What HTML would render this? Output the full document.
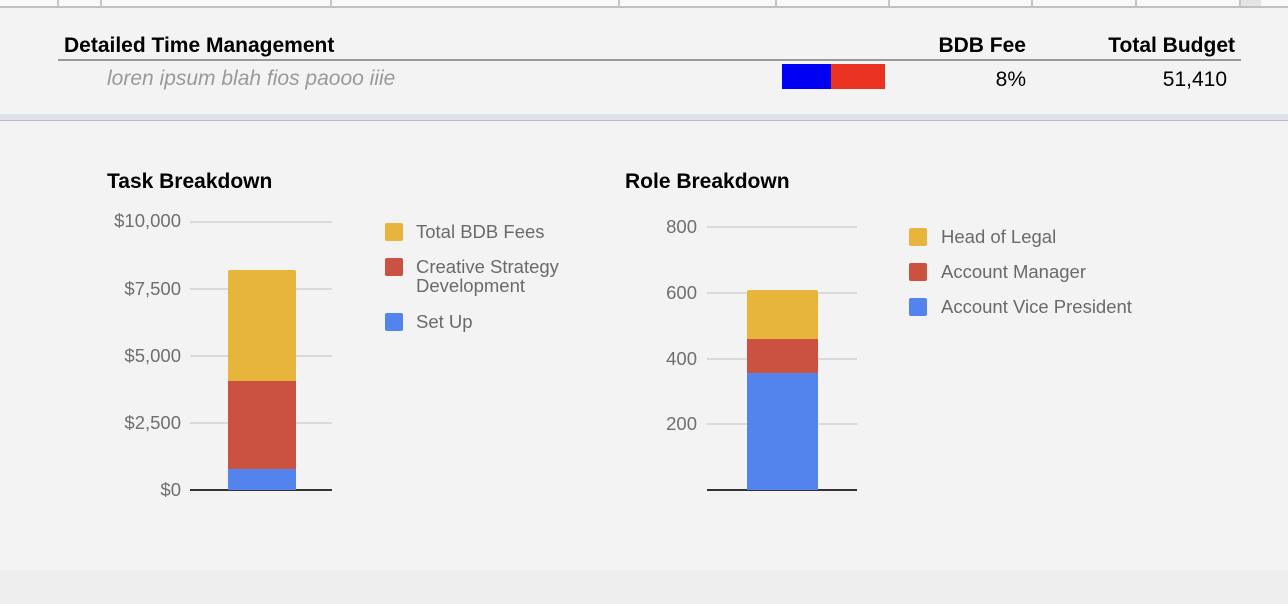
<!DOCTYPE html>
<html><head><meta charset="utf-8"><style>
*{margin:0;padding:0;box-sizing:border-box}
body{width:1288px;height:604px;background:#f3f3f3;position:relative;overflow:hidden;font-family:"Liberation Sans",Arial,sans-serif}
.a{position:absolute}
.vl{position:absolute;top:0;height:6px;width:2px;background:#c6c6c6}
.g{position:absolute;height:2px;background:#dadada}
.yl{position:absolute;font-size:18.5px;color:#6f6f6f;text-align:right;width:90px;line-height:20px}
.sq{position:absolute;width:18px;height:18px;border-radius:2px}
.lt{position:absolute;font-size:18.5px;color:#6a6a6a;line-height:19px}
</style></head><body>
<div class="a" style="left:0;top:0;width:1288px;height:6px;background:#f8f9fa"></div>
<div class="a" style="left:0;top:6px;width:1288px;height:2px;background:#c0c0c0"></div>
<div class="vl" style="left:57px"></div><div class="vl" style="left:100px"></div><div class="vl" style="left:330px"></div><div class="vl" style="left:618px"></div><div class="vl" style="left:775px"></div><div class="vl" style="left:888px"></div><div class="vl" style="left:1031px"></div><div class="vl" style="left:1135px"></div><div class="vl" style="left:1239px"></div>
<div class="a" style="left:1241px;top:0;width:20px;height:6px;background:#e4e4e4"></div>

<div class="a" style="left:64px;top:34px;font-size:21px;font-weight:bold;color:#000">Detailed Time Management</div>
<div class="a" style="left:880px;width:146px;text-align:right;top:34px;font-size:21px;font-weight:bold">BDB Fee</div>
<div class="a" style="left:1040px;width:195px;text-align:right;top:34px;font-size:21px;font-weight:bold">Total Budget</div>
<div class="a" style="left:58px;top:59px;width:1183px;height:2px;background:#999"></div>
<div class="a" style="left:107px;top:67px;font-size:21px;font-style:italic;color:#999">loren ipsum blah fios paooo iiie</div>
<div class="a" style="left:782px;top:64px;width:49px;height:25px;background:#0000f5"></div>
<div class="a" style="left:831px;top:64px;width:54px;height:25px;background:#ea3323"></div>
<div class="a" style="left:900px;width:126px;text-align:right;top:68px;font-size:21px">8%</div>
<div class="a" style="left:1050px;width:177px;text-align:right;top:68px;font-size:21px">51,410</div>
<div class="a" style="left:0;top:114px;width:1288px;height:6px;background:#dde1e8"></div>
<div class="a" style="left:0;top:120px;width:1288px;height:1px;background:#b8bcc4"></div>

<div class="a" style="left:107px;top:170px;font-size:21px;font-weight:bold">Task Breakdown</div>
<div class="g" style="left:190px;top:221px;width:142px"></div>
<div class="g" style="left:190px;top:288px;width:142px"></div>
<div class="g" style="left:190px;top:355px;width:142px"></div>
<div class="g" style="left:190px;top:422px;width:142px"></div>
<div class="a" style="left:190px;top:489px;width:142px;height:2px;background:#333"></div>
<div class="yl" style="left:91px;top:211px">$10,000</div>
<div class="yl" style="left:91px;top:279px">$7,500</div>
<div class="yl" style="left:91px;top:346px">$5,000</div>
<div class="yl" style="left:91px;top:413px">$2,500</div>
<div class="yl" style="left:91px;top:480px">$0</div>
<div class="a" style="left:228px;top:270px;width:68px;height:111px;background:#e8b53c;border-radius:2px 2px 0 0"></div>
<div class="a" style="left:228px;top:381px;width:68px;height:88px;background:#cb5140"></div>
<div class="a" style="left:228px;top:469px;width:68px;height:21px;background:#5383ec"></div>
<div class="sq" style="left:385px;top:223px;background:#e8b53c"></div>
<div class="sq" style="left:385px;top:258px;background:#cb5140"></div>
<div class="sq" style="left:385px;top:313px;background:#5383ec"></div>
<div class="lt" style="left:416px;top:222px">Total BDB Fees</div>
<div class="lt" style="left:416px;top:257px">Creative Strategy<br>Development</div>
<div class="lt" style="left:416px;top:312px">Set Up</div>

<div class="a" style="left:625px;top:170px;font-size:21px;font-weight:bold">Role Breakdown</div>
<div class="g" style="left:707px;top:226px;width:150px"></div>
<div class="g" style="left:707px;top:292px;width:150px"></div>
<div class="g" style="left:707px;top:358px;width:150px"></div>
<div class="g" style="left:707px;top:423px;width:150px"></div>
<div class="a" style="left:707px;top:489px;width:150px;height:2px;background:#333"></div>
<div class="yl" style="left:607px;top:217px">800</div>
<div class="yl" style="left:607px;top:283px">600</div>
<div class="yl" style="left:607px;top:349px">400</div>
<div class="yl" style="left:607px;top:414px">200</div>
<div class="a" style="left:747px;top:290px;width:71px;height:49px;background:#e8b53c;border-radius:2px 2px 0 0"></div>
<div class="a" style="left:747px;top:339px;width:71px;height:34px;background:#cb5140"></div>
<div class="a" style="left:747px;top:373px;width:71px;height:117px;background:#5383ec"></div>
<div class="sq" style="left:909px;top:228px;background:#e8b53c"></div>
<div class="sq" style="left:909px;top:263px;background:#cb5140"></div>
<div class="sq" style="left:909px;top:298px;background:#5383ec"></div>
<div class="lt" style="left:941px;top:227px">Head of Legal</div>
<div class="lt" style="left:941px;top:262px">Account Manager</div>
<div class="lt" style="left:941px;top:297px">Account Vice President</div>

<div class="a" style="left:0;top:570px;width:1288px;height:34px;background:#eeeeee"></div>
</body></html>
